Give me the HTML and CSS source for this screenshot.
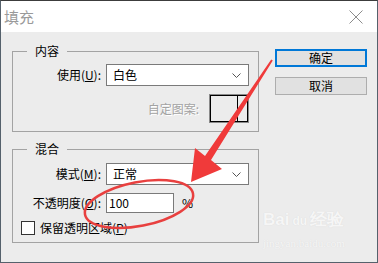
FILE: index.html
```html
<!DOCTYPE html>
<html>
  <head>
    <meta charset="utf-8">
    <link rel="stylesheet" href="styles.css">
  </head>
  <body>
    <div class="window">
      <div class="titlebar">
        <span class="title">填充</span>
        <svg class="close" width="14" height="14" viewBox="0 0 14 14">
          <path d="M0.5 0.5 L13.5 13.5 M13.5 0.5 L0.5 13.5" stroke="#8c8c8c" stroke-width="1" fill="none" />
        </svg>
      </div>

      <div class="content">
        <div class="groups">
          <fieldset class="group group-content">
            <legend>内容</legend>
            <div class="row">
              <span class="lbl">使用(<u>U</u>):</span>
              <div class="select">
                <span>白色</span>
                <svg width="9" height="5" viewBox="0 0 9 5"><path d="M0.5 0.5 L4.5 4.5 L8.5 0.5" stroke="#555" fill="none" /></svg>
              </div>
            </div>
            <div class="row pattern-row">
              <span class="dim">自定图案:</span>
              <div class="swatch"><div class="swatch-inner"><span></span></div></div>
            </div>
          </fieldset>

          <fieldset class="group group-blend">
            <legend>混合</legend>
            <div class="row">
              <span class="lbl">模式(<u>M</u>):</span>
              <div class="select">
                <span>正常</span>
                <svg width="9" height="5" viewBox="0 0 9 5"><path d="M0.5 0.5 L4.5 4.5 L8.5 0.5" stroke="#555" fill="none" /></svg>
              </div>
            </div>
            <div class="row opacity-row">
              <span class="lbl">不透明度(<u>O</u>):</span>
              <div class="input">100</div>
              <span class="pct">%</span>
            </div>
            <div class="row check-row">
              <span class="checkbox"></span>
              <span>保留透明区域(<u>P</u>)</span>
            </div>
          </fieldset>
        </div>

        <div class="buttons">
          <div class="btn primary">确定</div>
          <div class="btn">取消</div>
        </div>
      </div>

      <div class="watermark">
        <div class="wm-logo">Bai<span class="paw">du</span>经验</div>
        <div class="wm-url">jingyan.baidu.com</div>
      </div>

      <!-- red markup drawn over the dialog -->
      <svg class="annot" width="378" height="263" viewBox="0 0 378 263">
        <polygon points="271.2,59.5 272.8,60.5 211,160 222,169 191,182 195,148 205,156" fill="#f03a3a" />
        <ellipse cx="139" cy="204" rx="55" ry="22" transform="rotate(-11 139 204)" fill="none" stroke="#e8403f" stroke-width="2.5" />
      </svg>
    </div>
  </body>
</html>
```

FILE: styles.css
```css
body {
  margin: 0;
  font-family: "Noto Sans CJK SC", "Microsoft YaHei", sans-serif;
  font-size: 12px;
  color: #000;
}

.window {
  position: relative;
  width: 378px;
  height: 263px;
  box-sizing: border-box;
  border: 1px solid #55616c;
  border-top-color: #3c3c3c;
  background: #ececec;
  overflow: hidden;
}

.titlebar {
  height: 31px;
  background: #fff;
  display: flex;
  align-items: center;
  justify-content: space-between;
  padding: 0 14px 0 3px;
}

.title {
  font-size: 15px;
  color: #9a9a9a;
  line-height: 16px;
}

.content {
  display: flex;
  gap: 16px;
  padding: 12px 10px 0 11px;
}

.groups {
  width: 247px;
}

.group {
  margin: 0;
  padding: 6px 9px 8px 0;
  border: 1px solid #a3a3a3;
  min-width: 0;
}

.group legend {
  margin-left: 14px;
  padding: 0 8px;
  line-height: 14px;
}

.group-blend {
  margin-top: 10px;
  padding-top: 7px;
  padding-bottom: 7px;
}

.row {
  display: flex;
  align-items: center;
  line-height: 14px;
}

.lbl {
  width: 88px;
  margin-right: 5px;
  text-align: right;
  white-space: nowrap;
}

.select {
  width: 143px;
  height: 22px;
  box-sizing: border-box;
  border: 1px solid #7a7a7a;
  background: #fff;
  display: flex;
  align-items: center;
  justify-content: space-between;
  padding: 0 7px 0 6px;
}

.pattern-row {
  justify-content: flex-end;
  margin-top: 8px;
}

.dim {
  color: #a3a3a3;
  text-shadow: 1px 1px 0 #fff;
  margin-right: 10px;
}

.swatch {
  width: 40px;
  height: 29px;
  box-sizing: border-box;
  border: 1px solid #8a8a8a;
}

.swatch-inner {
  height: 100%;
  box-sizing: border-box;
  border: 1px solid #000;
}

.swatch-inner span {
  display: block;
  width: 26px;
  height: 100%;
  border-right: 1px solid #000;
}

.opacity-row {
  margin-top: 8px;
}

.input {
  width: 68px;
  height: 20px;
  box-sizing: border-box;
  border: 1px solid #7a7a7a;
  background: #fff;
  padding-left: 2px;
  line-height: 18px;
}

.pct {
  margin-left: 8px;
}

.check-row {
  margin-top: 8px;
}

.checkbox {
  width: 14px;
  height: 14px;
  box-sizing: border-box;
  border: 1px solid #333;
  background: #fff;
  margin: 0 5px 0 8px;
}

.buttons {
  display: flex;
  flex-direction: column;
  gap: 10px;
  padding-top: 5px;
}

.btn {
  width: 92px;
  height: 18px;
  box-sizing: border-box;
  border: 1px solid #adadad;
  background: #e1e1e1;
  text-align: center;
  line-height: 16px;
}

.btn.primary {
  border: 2px solid #0078d7;
  line-height: 14px;
}

.watermark {
  position: absolute;
  left: 262px;
  top: 208px;
  color: #f6f6f6;
  text-shadow: 0 0 1px #d6d6d6;
  pointer-events: none;
}

.wm-logo {
  font-family: "Liberation Sans", sans-serif;
  font-size: 17px;
  font-weight: bold;
  line-height: 22px;
}

.wm-logo .paw {
  font-size: 12px;
  margin: 0 3px;
}

.wm-url {
  font-family: "Liberation Serif", serif;
  font-size: 11px;
  line-height: 14px;
  margin-top: 4px;
}

.annot {
  position: absolute;
  left: -1px;
  top: -1px;
  pointer-events: none;
}
```
